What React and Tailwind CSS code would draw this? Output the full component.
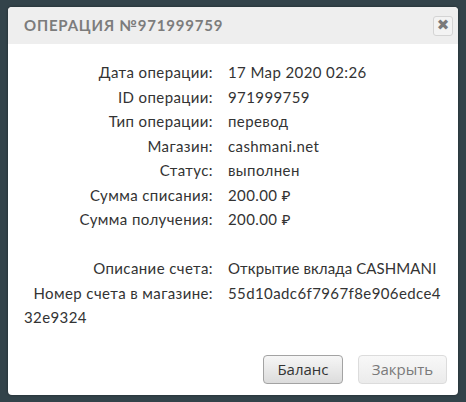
import React from 'react';

const rows = [
  ['Дата операции:', '17 Мар 2020 02:26'],
  ['ID операции:', '971999759'],
  ['Тип операции:', 'перевод'],
  ['Магазин:', 'cashmani.net'],
  ['Статус:', 'выполнен'],
  ['Сумма списания:', '200.00 ₽'],
  ['Сумма получения:', '200.00 ₽'],
];

const Row = ({ label, children }) => (
  <div className="whitespace-nowrap">
    <span className="inline-block w-[189px] text-right">{label}</span>
    <span className="ml-[15px]">{children}</span>
  </div>
);

export default function App() {
  return (
    <div className="w-[466px] h-[402px] bg-[#33434a] pt-[7px] pl-[8px] overflow-hidden">
      <div className="w-[450px] h-[388px] bg-white rounded-[4px] flex flex-col shadow-[0_0_3px_rgba(0,0,0,0.4)]">
        {/* Header */}
        <div className="h-[37px] bg-[#eeeeee] rounded-t-[4px] flex items-center justify-between pl-[16px] pr-[5px]">
          <h3 className="font-['Lato','Noto_Sans',sans-serif] text-[15px] font-bold tracking-[0.8px] text-[#7c7c7c] uppercase">
            Операция №971999759
          </h3>
          <button className="w-[20px] h-[20px] flex items-center justify-center rounded-[3px] border border-[#d4d4d4] bg-[#f3f3f3] text-[#7a7a7a] text-[15px] leading-none font-['DejaVu_Sans',sans-serif]">
            ✖
          </button>
        </div>

        {/* Body */}
        <div className="flex-1 px-[16px] pt-[16px] font-['Lato','Noto_Sans',sans-serif] text-[15px] tracking-[0.4px] leading-[24.5px] text-[#333]">
          {rows.map(([l, v]) => (
            <Row key={l} label={l}>{v}</Row>
          ))}
          <div className="h-[24.5px]" />
          <Row label="Описание счета:">
            <span className="tracking-[0.1px]">Открытие вклада CASHMANI</span>
          </Row>
          <Row label="Номер счета в магазине:">
            55d10adc6f7967f8e906edce4
            <br />
            32e9324
          </Row>
        </div>

        {/* Footer */}
        <div className="flex justify-end gap-[15px] pr-[11px] pb-[11px] font-['Open_Sans',sans-serif] text-[15px]">
          <button className="w-[80px] h-[29px] rounded-[4px] border border-[#a3a3a3] bg-gradient-to-b from-[#f6f6f6] to-[#dcdcdc] text-[#333]">
            Баланс
          </button>
          <button className="w-[89px] h-[29px] rounded-[4px] border border-[#dcdcdc] bg-gradient-to-b from-[#f8f8f8] to-[#ebebeb] text-[#7a7a7a]">
            Закрыть
          </button>
        </div>
      </div>
    </div>
  );
}
